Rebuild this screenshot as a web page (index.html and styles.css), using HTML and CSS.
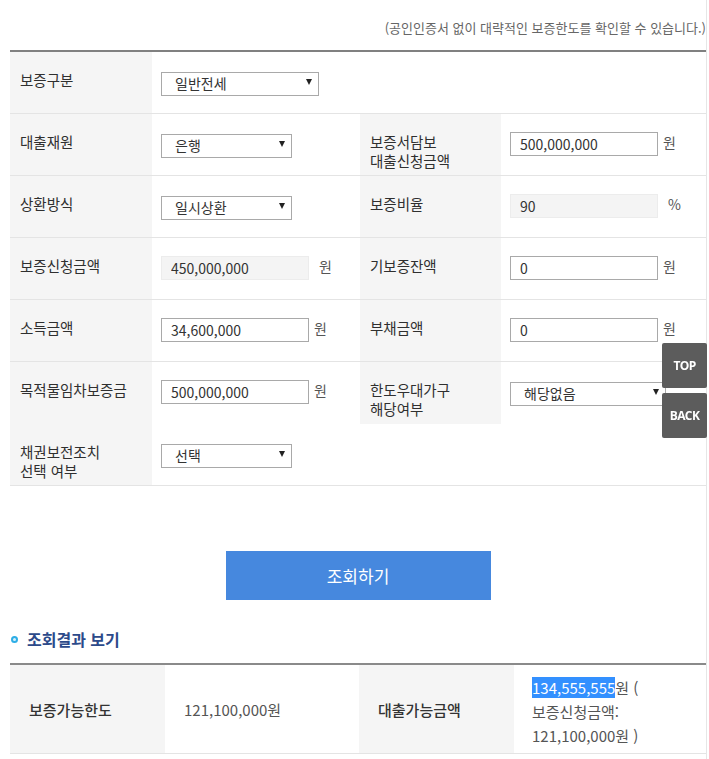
FILE: index.html
```html
<!DOCTYPE html>
<html lang="ko">
<head>
<meta charset="utf-8">
<title>보증한도 조회</title>
<link rel="stylesheet" href="styles.css">
</head>
<body>
<div class="frame">
  <p class="note">(공인인증서 없이 대략적인 보증한도를 확인할 수 있습니다.)</p>

  <div class="form-grid">
    <div class="th">보증구분</div>
    <div class="td span3"><span class="sel w158"><select><option>일반전세</option></select></span></div>

    <div class="th">대출재원</div>
    <div class="td"><span class="sel w131"><select><option>은행</option></select></span></div>
    <div class="th">보증서담보<br>대출신청금액</div>
    <div class="td"><input class="inp" type="text" value="500,000,000"><span class="unit">원</span></div>

    <div class="th">상환방식</div>
    <div class="td"><span class="sel w131"><select><option>일시상환</option></select></span></div>
    <div class="th">보증비율</div>
    <div class="td"><input class="inp ro" type="text" value="90" readonly><span class="unit far">%</span></div>

    <div class="th">보증신청금액</div>
    <div class="td"><input class="inp ro" type="text" value="450,000,000" readonly><span class="unit far">원</span></div>
    <div class="th">기보증잔액</div>
    <div class="td"><input class="inp" type="text" value="0"><span class="unit">원</span></div>

    <div class="th">소득금액</div>
    <div class="td"><input class="inp" type="text" value="34,600,000"><span class="unit">원</span></div>
    <div class="th">부채금액</div>
    <div class="td"><input class="inp" type="text" value="0"><span class="unit">원</span></div>

    <div class="th nb">목적물임차보증금</div>
    <div class="td nb"><input class="inp" type="text" value="500,000,000"><span class="unit">원</span></div>
    <div class="th nb">한도우대가구<br>해당여부</div>
    <div class="td nb"><span class="sel w156"><select><option>해당없음</option></select></span></div>

    <div class="th">채권보전조치<br>선택 여부</div>
    <div class="td span3"><span class="sel w131"><select><option>선택</option></select></span></div>
  </div>

  <div class="btn-wrap"><button class="btn-search" type="button">조회하기</button></div>

  <h3 class="sub-title">조회결과 보기</h3>

  <div class="result-grid">
    <div class="rth">보증가능한도</div>
    <div class="rtd">121,100,000원</div>
    <div class="rth">대출가능금액</div>
    <div class="rtd multi"><span class="hl">134,555,555</span>원 (<br>보증신청금액:<br>121,100,000원 )</div>
  </div>
</div>

<div class="quick">
  <a class="quick-btn" href="#">TOP</a>
  <a class="quick-btn" href="#">BACK</a>
</div>
</body>
</html>
```

FILE: styles.css
```css
html, body {
  margin: 0;
  padding: 0;
  background: #fff;
}
body {
  font-family: "Noto Sans CJK KR", "Noto Sans", sans-serif;
  color: #333;
}
.frame {
  width: 707px;
  min-height: 759px;
  padding-left: 10px;
  box-sizing: border-box;
  border-right: 1px solid #e6e6e6;
}
.note {
  margin: 0;
  padding-top: 18px;
  height: 50px;
  box-sizing: border-box;
  text-align: right;
  font-size: 13px;
  line-height: 20px;
  color: #666;
}
.form-grid {
  width: 696px;
  display: grid;
  grid-template-columns: 142px 208px 141px 205px;
  border-top: 2px solid #808080;
}
.th, .td {
  height: 62px;
  box-sizing: border-box;
  border-bottom: 1px solid #e4e4e4;
  padding-top: 18px;
}
.th {
  background: #f5f5f5;
  padding-left: 10px;
  font-size: 14.5px;
  line-height: 19px;
  color: #2f2f2f;
}
.td {
  padding-left: 9px;
  display: flex;
  align-items: flex-start;
}
.span3 {
  grid-column: span 3;
}
.nb {
  border-bottom: 0;
}
.inp {
  width: 148px;
  height: 24px;
  box-sizing: border-box;
  border: 1px solid #a9a9a9;
  padding: 0 9px;
  margin: 0;
  font-family: "Noto Sans CJK KR", "Noto Sans", sans-serif;
  font-size: 14px;
  color: #333;
  background: #fff;
  outline: none;
}
.inp.ro {
  background: #f4f4f4;
  border-color: #ececec;
}
.unit {
  margin-left: 5px;
  font-size: 14px;
  line-height: 20px;
  color: #555;
}
.unit.far {
  margin-left: 10px;
}
.sel {
  position: relative;
  display: inline-block;
  height: 24px;
}
.sel select {
  appearance: none;
  -webkit-appearance: none;
  width: 100%;
  height: 24px;
  box-sizing: border-box;
  border: 1px solid #a9a9a9;
  border-radius: 0;
  background: #fff;
  margin: 0;
  padding: 0 0 2px 13px;
  font-family: "Noto Sans CJK KR", "Noto Sans", sans-serif;
  font-size: 14px;
  color: #333;
  outline: none;
}
.sel::after {
  content: "";
  position: absolute;
  right: 7px;
  top: 9px;
  border-left: 3.5px solid transparent;
  border-right: 3.5px solid transparent;
  border-top: 6px solid #222;
  pointer-events: none;
}
.w158 { width: 158px; }
.w131 { width: 131px; }
.w156 { width: 156px; }

.btn-wrap {
  width: 696px;
  display: flex;
  justify-content: center;
  margin-top: 65px;
}
.btn-search {
  width: 265px;
  height: 49px;
  border: 0;
  background: #4688de;
  color: #fff;
  font-family: "Noto Sans CJK KR", "Noto Sans", sans-serif;
  font-size: 17px;
  cursor: pointer;
}
.sub-title {
  margin: 27px 0 0 0;
  height: 24px;
  display: flex;
  align-items: center;
  gap: 9px;
  font-size: 16px;
  line-height: 24px;
  font-weight: bold;
  color: #2c4a8a;
}
.sub-title::before {
  content: "";
  width: 3px;
  height: 3px;
  border: 2px solid #2eaee6;
  border-radius: 50%;
  background: #d9f1fb;
  margin-left: 1px;
}
.result-grid {
  margin-top: 12px;
  width: 696px;
  display: grid;
  grid-template-columns: 155px 194px 155px 192px;
  border-top: 2px solid #8a8a8a;
}
.rth, .rtd {
  height: 89px;
  box-sizing: border-box;
  border-bottom: 1px solid #e4e4e4;
  display: flex;
  align-items: center;
}
.rth {
  background: #f5f5f5;
  padding-left: 19px;
  font-size: 15px;
  font-weight: 500;
  color: #333;
}
.rtd {
  padding-left: 19px;
  font-size: 15px;
  color: #555;
}
.rtd.multi {
  display: block;
  padding: 11px 0 0 18px;
  line-height: 24px;
}
.hl {
  background: #3390ff;
  color: #fff;
}
.quick {
  position: fixed;
  right: 2px;
  top: 343px;
  display: flex;
  flex-direction: column;
  gap: 5px;
  z-index: 10;
}
.quick-btn {
  width: 45px;
  height: 45px;
  display: flex;
  align-items: center;
  justify-content: center;
  background: #5c5c5c;
  border-radius: 2px;
  color: #fff;
  text-decoration: none;
  font-family: "Open Sans", "Liberation Sans", sans-serif;
  font-size: 12px;
  font-weight: bold;
  letter-spacing: -0.6px;
}
```
